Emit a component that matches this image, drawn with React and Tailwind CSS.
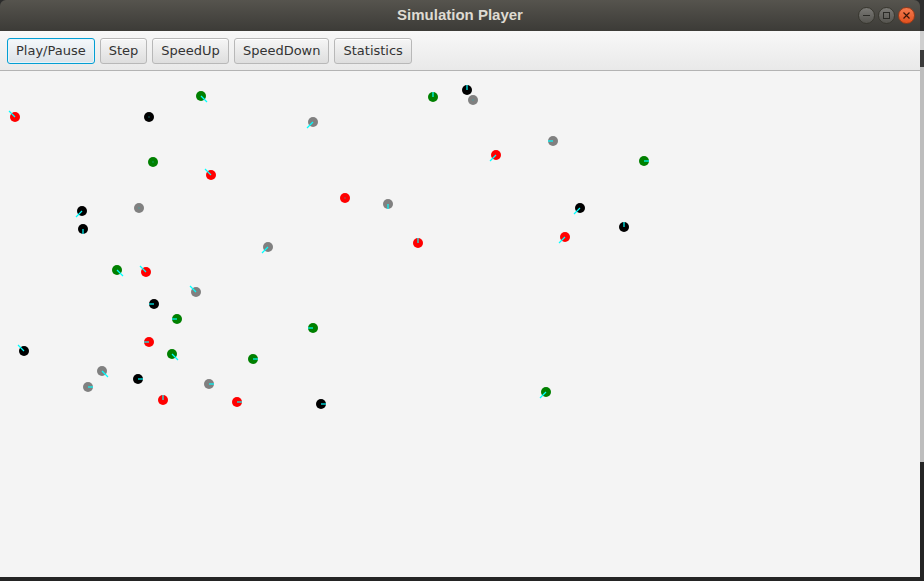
import React from "react";

// dots on the simulation canvas: x, y, colour, heading
const agents = [
  [15, 46, "#ff0000", "ul"],
  [149, 46, "#000000", "o"],
  [201, 25, "#008000", "dr"],
  [313, 51, "#808080", "dl"],
  [153, 91, "#008000", "o"],
  [211, 104, "#ff0000", "ul"],
  [82, 140, "#000000", "dl"],
  [139, 137, "#808080", "o"],
  [83, 158, "#000000", "d"],
  [268, 176, "#808080", "dl"],
  [117, 199, "#008000", "dr"],
  [146, 201, "#ff0000", "ul"],
  [196, 221, "#808080", "ul"],
  [154, 233, "#000000", "l"],
  [177, 248, "#008000", "l"],
  [313, 257, "#008000", "l"],
  [149, 271, "#ff0000", "l"],
  [24, 280, "#000000", "ul"],
  [172, 283, "#008000", "dr"],
  [253, 288, "#008000", "r"],
  [102, 300, "#808080", "dr"],
  [138, 308, "#000000", "r"],
  [88, 316, "#808080", "r"],
  [209, 313, "#808080", "r"],
  [163, 329, "#ff0000", "u"],
  [237, 331, "#ff0000", "r"],
  [321, 333, "#000000", "r"],
  [433, 26, "#008000", "u"],
  [467, 19, "#000000", "u"],
  [473, 29, "#808080", "o"],
  [553, 70, "#808080", "l"],
  [496, 84, "#ff0000", "dl"],
  [644, 90, "#008000", "r"],
  [345, 127, "#ff0000", "o"],
  [388, 133, "#808080", "d"],
  [580, 137, "#000000", "dl"],
  [624, 156, "#000000", "u"],
  [418, 172, "#ff0000", "u"],
  [565, 166, "#ff0000", "dl"],
  [546, 321, "#008000", "dl"],
];

const heading = {
  ul: [-6, -6],
  dl: [-6, 6],
  dr: [6, 6],
  u: [0, -5],
  d: [0, 5],
  l: [-5, 0],
  r: [5, 0],
  o: [0, 0],
};

const buttons = ["Play/Pause", "Step", "SpeedUp", "SpeedDown", "Statistics"];

const App = () => {
  return (
    <div className="w-[924px] h-[581px] bg-[#242424] flex overflow-hidden">
      {/* Window */}
      <div className="w-[920px] h-[577px] flex flex-col bg-[#f4f4f4]">
        {/* Title bar */}
        <div className="h-[31px] shrink-0 bg-[#2b2b2b]">
          <div className="h-full rounded-t-[6px] bg-gradient-to-b from-[#56544e] to-[#3c3b37] flex items-center relative">
            <div
              className="flex-1 text-center text-[15px] font-bold text-[#dfdbd2]"
              style={{ fontFamily: '"Liberation Sans", Arial, sans-serif' }}
            >
              Simulation Player
            </div>
            <div className="absolute right-[5px] top-[7px] flex gap-[3px]">
              <div className="w-[17px] h-[17px] rounded-full bg-gradient-to-b from-[#7a7975] to-[#55544f] border border-[#38372f] flex items-center justify-center">
                <div className="w-[7px] h-[1px] bg-[#2a2a26]" />
              </div>
              <div className="w-[17px] h-[17px] rounded-full bg-gradient-to-b from-[#7a7975] to-[#55544f] border border-[#38372f] flex items-center justify-center">
                <div className="w-[7px] h-[7px] border border-[#2a2a26]" />
              </div>
              <div className="w-[17px] h-[17px] rounded-full bg-gradient-to-b from-[#f47a4d] to-[#e1501c] border border-[#9a3a18] flex items-center justify-center">
                <svg width="7" height="7" viewBox="0 0 7 7">
                  <path d="M0.5 0.5 L6.5 6.5 M6.5 0.5 L0.5 6.5" stroke="#3a1608" strokeWidth="1.2" />
                </svg>
              </div>
            </div>
          </div>
        </div>

        {/* Toolbar */}
        <div
          className="h-[40px] shrink-0 bg-gradient-to-b from-[#f8f8f8] to-[#e9e9e9] border-b border-[#b3b3b3] flex items-center gap-[5px] pl-[7px]"
          style={{ fontFamily: '"DejaVu Sans", Verdana, sans-serif' }}
        >
          {buttons.map((label, i) => (
            <div
              key={label}
              className={
                i === 0
                  ? "h-[26px] px-[8px] flex items-center rounded-[3px] border border-[#039ed3] bg-gradient-to-b from-[#f4f8fb] to-[#dde3e8] shadow-[inset_0_0_0_1px_#e6f4fa] text-[13px] text-[#333333]"
                  : "h-[26px] px-[8px] flex items-center rounded-[3px] border border-[#b8b8b8] bg-gradient-to-b from-[#f6f6f6] to-[#dedede] shadow-[inset_0_1px_0_#ffffff] text-[13px] text-[#333333]"
              }
            >
              {label}
            </div>
          ))}
        </div>

        {/* Simulation canvas */}
        <div className="flex-1">
          <svg width="920" height="506" className="block">
            {agents.map(([x, y, fill, dir], i) => {
              const [dx, dy] = heading[dir];
              return (
                <g key={i}>
                  <circle cx={x} cy={y} r="5" fill={fill} />
                  {dir === "o" ? (
                    <rect x={x - 0.5} y={y - 0.5} width="1" height="1" fill="#1fb8b8" />
                  ) : (
                    <line
                      x1={x}
                      y1={y}
                      x2={x + dx}
                      y2={y + dy}
                      stroke="#00ffff"
                      strokeWidth="1.2"
                    />
                  )}
                </g>
              );
            })}
          </svg>
        </div>
      </div>

      {/* Desktop edge */}
      <div className="w-[4px] flex flex-col">
        <div className="h-[31px] bg-[#2e2e2e]" />
        <div className="h-[19px] bg-[#cfcfcf]" />
        <div className="h-[17px] bg-[#3a3a3a]" />
        <div className="h-[395px] bg-[#bdbdbd]" />
        <div className="flex-1 bg-[#242424]" />
      </div>
    </div>
  );
};

export default App;
